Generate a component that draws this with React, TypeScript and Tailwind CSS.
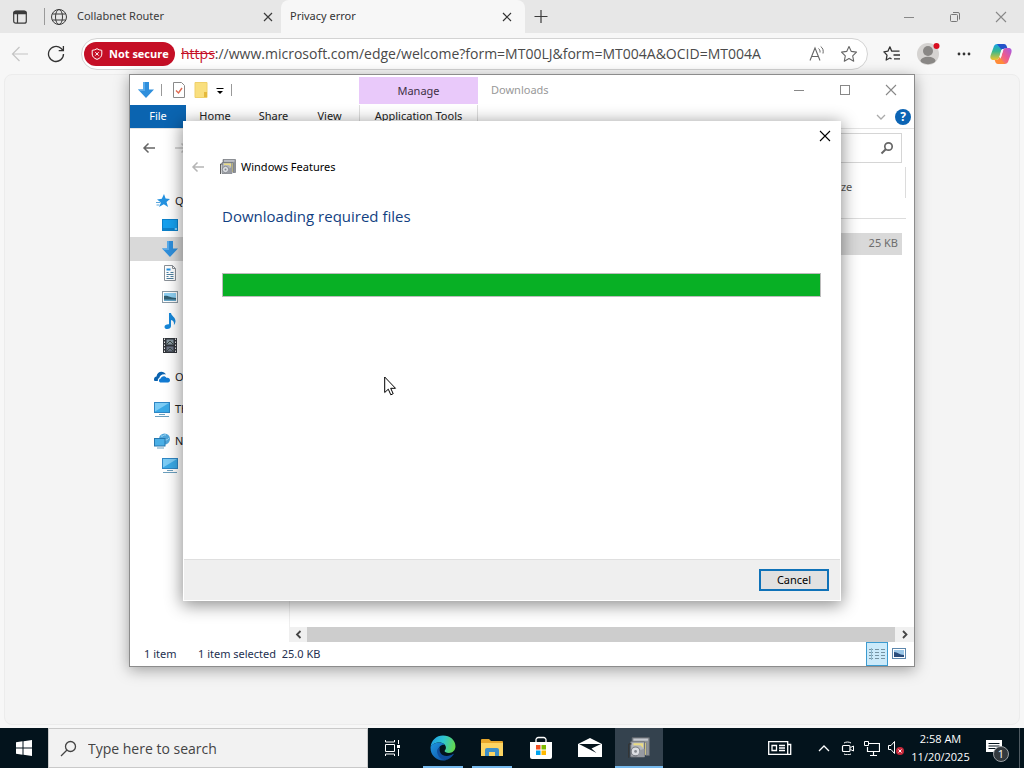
import type { ReactNode } from "react";

interface IconProps {
  className?: string;
}

function Svg({
  size = 16,
  className = "",
  children,
}: IconProps & { size?: number; children: ReactNode }) {
  return (
    <svg
      width={size}
      height={size}
      viewBox={`0 0 ${size} ${size}`}
      fill="none"
      stroke="currentColor"
      className={`shrink-0 ${className}`}
      aria-hidden="true"
    >
      {children}
    </svg>
  );
}

/* ---------- shared glyphs ---------- */

const CloseIcon = ({ className }: IconProps) => (
  <Svg size={12} className={className}>
    <path d="M1 1l10 10M11 1L1 11" strokeWidth="1.1" />
  </Svg>
);

const SmallCloseIcon = ({ className }: IconProps) => (
  <Svg size={10} className={className}>
    <path d="M1 1l8 8M9 1L1 9" strokeWidth="1.2" />
  </Svg>
);

const MinimizeIcon = ({ className }: IconProps) => (
  <Svg size={12} className={className}>
    <path d="M1 6.5h10" />
  </Svg>
);

const BackIcon = ({ className }: IconProps) => (
  <Svg size={14} className={className}>
    <path d="M13 7H2M6.5 2.5L2 7l4.500 4.500" strokeWidth="1.500" />
  </Svg>
);

const DownArrowIcon = () => (
  <Svg>
    <path d="M5 0h6v7.500h5L8 16 0 7.500h5z" fill="#2f8fdc" stroke="none" />
    <path d="M5 0h2v9H2L0 7.500h5z" fill="#58aaea" stroke="none" />
  </Svg>
);

const SetupIcon = ({ size = 16 }: { size?: number }) => (
  <svg width={size} height={size} viewBox="0 0 16 16" className="shrink-0" aria-hidden="true">
    <path d="M3 .5h12.500v13H13V4H3z" fill="#8f9399" stroke="#64686e" strokeWidth=".6" />
    <path d="M4 1.200h10.500v1.500H4z" fill="#c6c9cf" />
    <path d="M11.500 4h1.500v9h-1.500z" fill="#dccf86" />
    <path d="M2 3.500h10v11H2z" fill="#b4b7bc" stroke="#6f7378" strokeWidth=".7" />
    <path d="M4 4.500h7v3.500L9 6H4z" fill="#eadb83" />
    <path d="M.5 5v10M.5 5h2" stroke="#333" strokeWidth=".8" />
    <circle cx="5.500" cy="10.500" r="3.200" fill="#dcdee2" stroke="#767a80" strokeWidth=".8" />
    <circle cx="5.500" cy="10.500" r="1" fill="#85898f" />
    <path d="M9 9.500l3-1v6H6.500z" fill="#979aa1" />
  </svg>
);

/* ---------- browser glyphs ---------- */

const WorkspaceIcon = () => (
  <Svg>
    <rect x="1.700" y="2.200" width="12.600" height="12" rx="2" strokeWidth="1.200" />
    <path d="M1.500 4.500a2.500 2.500 0 012.500-2.800h8a2.500 2.500 0 012.500 2.800v.7h-13z" fill="currentColor" stroke="none" />
    <path d="M5.500 5v9" strokeWidth="1.200" />
  </Svg>
);

const GlobeIcon = () => (
  <Svg size={18}>
    <circle cx="9" cy="9" r="7.500" />
    <ellipse cx="9" cy="9" rx="3.500" ry="7.500" />
    <path d="M2.300 6h13.400M2.300 12h13.400" />
  </Svg>
);

const RefreshIcon = () => (
  <Svg size={18}>
    <path d="M16.500 9a7.500 7.500 0 11-2.600-5.700l2.100 2" strokeWidth="1.300" />
    <path d="M16.400 1v4.600h-4.700" strokeWidth="1.300" />
  </Svg>
);

const ShieldIcon = () => (
  <Svg size={12}>
    <path d="M6 .7c1.500 1 3 1.500 4.800 1.600V6c0 2.600-1.800 4.300-4.800 5.400C3 10.300 1.200 8.600 1.200 6V2.300C3 2.200 4.500 1.700 6 .7z" />
    <path d="M4.300 4.200l3.400 3.400M7.700 4.200L4.300 7.600" />
  </Svg>
);

const ReadAloudIcon = () => (
  <Svg size={18}>
    <path d="M2 15.500L7 3l5 12.500M3.700 11.500h6.700" strokeWidth="1.100" />
    <path d="M10.500 3.500c1.200.9 1.700 2.200 1.500 4M12.700 1.500c2.300 1.700 2.900 4 2.300 7" />
  </Svg>
);

const StarIcon = () => (
  <Svg size={18}>
    <path
      d="M9 1.500l2.300 4.900 5.200.7-3.800 3.700 1 5.400L9 13.600l-4.700 2.600 1-5.400L1.500 7.100l5.200-.7z"
      strokeLinejoin="round"
      strokeWidth="1.100"
    />
  </Svg>
);

const FavoritesIcon = () => (
  <Svg size={18}>
    <path
      d="M16.500 6.200h-5L8.600 6 6.900 1.800 4.900 6.200.9 6.800l3.100 3.300-.8 4.900 3.700-2 1.600.9"
      strokeLinejoin="round"
      strokeWidth="1.300"
    />
    <path d="M10.500 10h6.500M11 13.800h6" strokeWidth="1.300" />
  </Svg>
);

const CopilotIcon = () => (
  <svg width="24" height="24" viewBox="0 0 24 24" aria-hidden="true">
    <defs>
      <linearGradient id="copilotA" x1="0" y1="0" x2="0" y2="1">
        <stop offset="0" stopColor="#17a3e8" />
        <stop offset=".45" stopColor="#36b88f" />
        <stop offset="1" stopColor="#f2c32c" />
      </linearGradient>
      <linearGradient id="copilotB" x1="1" y1="0" x2="0" y2="1">
        <stop offset="0" stopColor="#a25ae8" />
        <stop offset=".5" stopColor="#ed5c8e" />
        <stop offset="1" stopColor="#ff9243" />
      </linearGradient>
    </defs>
    <path d="M15 2H8.500C6 2 5 3.500 4.300 6L1.700 13c-1 3.200.2 5 3 5H7c2 0 2.700-1 3.300-3l2.500-9c.3-1.300 1-2 2.200-2z" fill="url(#copilotA)" />
    <path d="M9.500 22h6c2.500 0 3.500-1.500 4.200-4l2.600-7c1-3.200-.2-5-3-5H17c-2 0-2.700 1-3.300 3l-2.500 9c-.3 1.300-.8 2-2 2z" fill="url(#copilotB)" />
    <path d="M8 2h7c1.700 0 2.300 1 2.800 2.500l.5 1.500H17c-2 0-2.800 1-3.400 3z" fill="#2453c9" />
    <path d="M16 22H9c-1.700 0-2.300-1-2.800-2.500L5.700 18H7c2 0 2.800-1 3.400-3l1.600 2z" fill="#ff8b38" />
    <path d="M10.500 15l2.600-8h1.500l-2.500 8z" fill="#f7f7f7" />
  </svg>
);

function IconButton({
  label,
  className = "",
  children,
}: {
  label: string;
  className?: string;
  children: ReactNode;
}) {
  return (
    <button
      type="button"
      aria-label={label}
      className={`flex shrink-0 items-center justify-center ${className}`}
    >
      {children}
    </button>
  );
}

function Browser() {
  return (
    <>
      <div className="flex h-[33px] shrink-0 items-stretch bg-[#e7e7e7] font-['Noto_Sans',sans-serif] text-[11px] text-[#3b3b3b]">
        <IconButton label="Tab actions" className="w-10">
          <WorkspaceIcon />
        </IconButton>
        <div className="my-2 ml-1 w-px bg-[#9a9a9a]" />
        <div className="flex w-[236px] items-center gap-[9px] pl-[5px]">
          <GlobeIcon />
          <span className="flex-1">Collabnet Router</span>
          <IconButton label="Close Collabnet Router" className="mr-2 size-[10px]">
            <SmallCloseIcon />
          </IconButton>
        </div>
        <div className="flex w-[244px] items-center rounded-t-lg bg-[#f7f7f7] pl-[9px] text-[#333]">
          <span className="flex-1">Privacy error</span>
          <IconButton label="Close Privacy error" className="mr-[13px] size-[10px]">
            <SmallCloseIcon />
          </IconButton>
        </div>
        <IconButton label="New tab" className="w-[31px]">
          <Svg>
            <path d="M8 1v13M1.500 7.500h13" strokeWidth="1.200" />
          </Svg>
        </IconButton>
        <div className="flex-1" />
        <IconButton label="Minimize browser" className="w-[46px] text-[#888]">
          <MinimizeIcon />
        </IconButton>
        <IconButton label="Restore browser" className="w-[46px] text-[#777]">
          <Svg size={12}>
            <rect x="1.500" y="3.500" width="7" height="7" rx="1" />
            <path d="M4 1.500h5a1.500 1.500 0 011.500 1.500v5.500" />
          </Svg>
        </IconButton>
        <IconButton label="Close browser" className="w-[46px] text-[#888]">
          <CloseIcon />
        </IconButton>
      </div>

      <div className="flex h-[41px] shrink-0 items-center bg-[#f7f7f7] pt-px text-[#333]">
        <IconButton label="Back" className="w-10 text-[#c4c4c4]">
          <Svg size={18}>
            <path d="M17 9H1.500M8.500 2L1.500 9l7 7" strokeWidth="1.200" />
          </Svg>
        </IconButton>
        <IconButton label="Refresh" className="w-8">
          <RefreshIcon />
        </IconButton>
        <div className="ml-[9px] flex h-8 flex-1 items-center rounded-full border border-[#d3d3d3] bg-white pl-[2px]">
          <button
            type="button"
            className="flex h-6 w-[91px] items-center gap-[6px] rounded-full bg-[#c50f26] pl-[7px] text-[11px] font-bold whitespace-nowrap text-white"
          >
            <ShieldIcon />
            Not secure
          </button>
          <label htmlFor="address" className="ml-[6px] text-sm text-[#c50f26] line-through">
            https
          </label>
          <input
            id="address"
            type="text"
            defaultValue="://www.microsoft.com/edge/welcome?form=MT00LJ&form=MT004A&OCID=MT004A"
            className="min-w-0 flex-1 bg-transparent text-sm text-[#4a4a4a] outline-none"
          />
          <IconButton label="Read aloud" className="w-8 text-[#666]">
            <ReadAloudIcon />
          </IconButton>
          <IconButton label="Add to favorites" className="mr-[2px] w-8 text-[#666]">
            <StarIcon />
          </IconButton>
        </div>
        <IconButton label="Favorites" className="ml-[6px] w-9">
          <FavoritesIcon />
        </IconButton>
        <IconButton label="Profile" className="w-9">
          <svg width="24" height="24" viewBox="0 0 24 24" aria-hidden="true">
            <circle cx="12" cy="12" r="11" fill="#d5d3d1" />
            <circle cx="12" cy="9" r="5" fill="#898785" />
            <ellipse cx="12" cy="18.500" rx="7.500" ry="3.700" fill="#898785" />
            <circle cx="20.500" cy="4" r="3" fill="#d80e20" />
          </svg>
        </IconButton>
        <IconButton label="Settings and more" className="w-9">
          <Svg>
            <g fill="currentColor" stroke="none">
              <circle cx="3" cy="8" r="1.400" />
              <circle cx="8" cy="8" r="1.400" />
              <circle cx="13" cy="8" r="1.400" />
            </g>
          </Svg>
        </IconButton>
        <IconButton label="Copilot" className="mr-1 w-[38px]">
          <CopilotIcon />
        </IconButton>
      </div>
    </>
  );
}

/* ---------- navigation pane ---------- */

const MonitorIcon = () => (
  <Svg>
    <rect x=".5" y="1.500" width="15" height="10" fill="#3aa9e6" stroke="#2f86c4" />
    <path d="M1 2h14L1 10.500z" fill="#7cccf5" stroke="none" />
    <path d="M5 13.500h6M1 15.500h14" stroke="#6b9fbe" />
  </Svg>
);

interface NavItem {
  name: string;
  icon: ReactNode;
  nested?: boolean;
  gap?: boolean;
  selected?: boolean;
}

const navItems: NavItem[] = [
  {
    name: "Quick access",
    icon: (
      <Svg size={14}>
        <path d="M8 0l1.600 4.500 4.400.4-3.500 3 1.600 5.100-4.300-2.700L3 13l2-4.500L1 5.500l4.800-.8z" fill="#2391e0" stroke="none" />
        <path d="M0 8.500h4.500M.5 11h3" stroke="#5ba6dc" />
      </Svg>
    ),
  },
  {
    name: "Desktop",
    nested: true,
    icon: (
      <Svg>
        <rect x=".5" y="2.500" width="15" height="11" fill="#16a0ee" stroke="#0b80c9" />
        <path d="M1 12h11" stroke="#0a65a6" />
        <path d="M13 12h2" stroke="#fff" />
      </Svg>
    ),
  },
  { name: "Downloads", nested: true, selected: true, icon: <DownArrowIcon /> },
  {
    name: "Documents",
    nested: true,
    icon: (
      <Svg>
        <path d="M2.500.5h8l3 3v12h-11z" fill="#fff" stroke="#8a9097" />
        <path d="M10.500.5v3h3" stroke="#8a9097" />
        <path d="M4.500 7.500h2M4.500 9.500h7M4.500 11.500h2M4.500 13.500h7M8.500 7.500h3M8.500 11.500h3" stroke="#4d7f9f" />
        <path d="M4.500 4.500h4" stroke="#2391e0" strokeWidth="2" />
      </Svg>
    ),
  },
  {
    name: "Pictures",
    nested: true,
    icon: (
      <Svg>
        <rect x=".5" y="2.500" width="15" height="11" fill="#fff" stroke="#8a9aa5" />
        <path d="M2 4h12v5H2z" fill="#8ed0f3" stroke="none" />
        <path d="M2 7c4-1 6 2 12 2v3H2z" fill="#315f72" stroke="none" />
        <path d="M2 10.500h12V12H2z" fill="#67a7c9" stroke="none" />
      </Svg>
    ),
  },
  {
    name: "Music",
    nested: true,
    icon: (
      <Svg>
        <path d="M7 0h2c.3 3 4.500 4 4.500 8 0 1.500-.7 3-1.600 4 .6-3-.8-4.500-2.900-5v6c0 1.700-1.600 3-3.700 3-1.700 0-2.800-.9-2.800-2.100C2.500 12 4.500 11 7 11.200z" fill="#1687d9" stroke="none" />
      </Svg>
    ),
  },
  {
    name: "Videos",
    nested: true,
    icon: (
      <Svg>
        <rect x="1" y="1" width="14" height="15" fill="#30343a" stroke="none" />
        <path d="M2.500 1.500v14M13.500 1.500v14" stroke="#e0e0e0" strokeDasharray="1.500 1.500" />
        <path d="M4.500 2.500h7v5h-7z" fill="#8796a0" stroke="none" />
        <path d="M4.500 9.500h7v5h-7z" fill="#6c7486" stroke="none" />
        <path d="M5 7l3-3 3 3M5 14l3-3 3 3" stroke="#3c4a42" />
      </Svg>
    ),
  },
  {
    name: "OneDrive",
    gap: true,
    icon: (
      <Svg>
        <path d="M0 11c-.2-2 1-3.300 2.500-3.500C3 4 6.500 1.500 10 3.500c1 .5 1.500 1.200 2 2C8 4.500 5.500 7 5.300 9 4 9.500 3.500 11 4 12H1.500C.7 12 0 11.700 0 11z" fill="#0a62ae" stroke="none" />
        <path d="M5 12c-.2-1.500.7-2.300 1.700-2.500C7 7 11 6 12.700 8.900 14.500 8.500 16 9.500 16 11.300c0 1.300-.8 2.200-2 2.200H7c-1.200 0-2-.6-2-1.500z" fill="#127bd3" stroke="none" />
      </Svg>
    ),
  },
  { name: "This PC", gap: true, icon: <MonitorIcon /> },
  {
    name: "Network",
    gap: true,
    icon: (
      <Svg>
        <circle cx="10.500" cy="6" r="5.500" fill="#4fa6db" stroke="none" />
        <path d="M7 3c2 1 3-2 5-1M9 8c2-2 4 0 6-3" stroke="#a9dcf5" />
        <rect x=".5" y="5.500" width="10.500" height="7.500" fill="#4aafe6" stroke="#2677ae" />
        <path d="M3 15h7" stroke="#6b9fbe" />
      </Svg>
    ),
  },
  { name: "Shared computer", nested: true, icon: <MonitorIcon /> },
];

function NavPane() {
  return (
    <nav aria-label="Folders" className="w-40 shrink-0 border-r border-[#efefef] pt-[22px]">
      {navItems.map((item) => (
        <a
          key={item.name}
          href="#"
          aria-label={item.name}
          className={`flex h-6 items-center gap-[5px] overflow-hidden ${
            item.nested ? "pl-8" : "pl-6"
          } ${item.gap ? "mt-2" : ""} ${item.selected ? "bg-[#d9d9d9]" : ""}`}
        >
          <span className="flex w-4 justify-end">{item.icon}</span>
          {item.nested ? null : <span>{item.name}</span>}
        </a>
      ))}
    </nav>
  );
}

/* ---------- explorer window ---------- */

function Explorer() {
  return (
    <section
      aria-label="Downloads"
      className="absolute top-[74px] right-[109px] bottom-[101px] left-[129px] flex flex-col border border-[#8c8c8c] bg-white font-['Noto_Sans',sans-serif] text-[11px] text-[#222] shadow-[0_3px_14px_rgba(0,0,0,0.35)]"
    >
      <div className="flex h-[30px] shrink-0 items-center">
        <div className="flex flex-1 items-center">
          <div className="flex w-[229px] items-center pl-2">
            <DownArrowIcon />
            <div className="ml-[7px] h-3 w-px bg-[#999]" />
            <IconButton label="Properties" className="ml-[9px]">
              <Svg>
                <path d="M2.500.5h8l3 3v12h-11z" fill="#fff" stroke="#8a8a8a" />
                <path d="M5 8.500l2.500 2.500L11 6" stroke="#df6a50" strokeWidth="1.400" />
              </Svg>
            </IconButton>
            <IconButton label="New folder" className="ml-[6px]">
              <Svg>
                <path d="M2 .5h12v15H2z" fill="#f9df7e" stroke="#efd06a" />
                <path d="M11 10h3v5h-3z" fill="#e5b93c" stroke="none" />
              </Svg>
            </IconButton>
            <IconButton label="Customize toolbar" className="ml-[6px] text-black">
              <Svg size={10}>
                <path d="M1.500 3.500h7" />
                <path d="M2 6h6L5 9z" fill="currentColor" stroke="none" />
              </Svg>
            </IconButton>
            <div className="ml-[6px] h-3 w-px bg-[#999]" />
          </div>
          <div className="flex h-[27px] w-[119px] items-center justify-center self-end bg-[#e9c9fa] pt-[2px] text-[#3d3045]">
            Manage
          </div>
          <span className="ml-[13px] text-[#999]">Downloads</span>
        </div>
        <IconButton label="Minimize" className="w-[46px] text-[#888]">
          <MinimizeIcon />
        </IconButton>
        <IconButton label="Maximize" className="w-[46px] text-[#888]">
          <Svg size={12}>
            <rect x="1.500" y="1.500" width="9" height="9" />
          </Svg>
        </IconButton>
        <IconButton label="Close" className="w-[46px] text-[#888]">
          <CloseIcon />
        </IconButton>
      </div>

      <div className="flex h-6 shrink-0 border-b border-[#e3e3e3]">
        <button type="button" className="w-14 bg-[#0b64b0] text-white">
          File
        </button>
        <button type="button" className="w-[58px]">Home</button>
        <button type="button" className="w-[59px]">Share</button>
        <button type="button" className="w-[53px]">View</button>
        <button type="button" className="ml-[3px] w-[119px] border-x border-[#dedede] whitespace-nowrap">
          Application Tools
        </button>
        <div className="flex-1" />
        <IconButton label="Expand ribbon" className="w-5 text-[#aaa]">
          <Svg size={10}>
            <path d="M1 3l4 4 4-4" strokeWidth="1.300" />
          </Svg>
        </IconButton>
        <IconButton label="Help" className="mr-[3px] ml-1 w-4 text-white">
          <span className="flex size-4 shrink-0 items-center justify-center rounded-full bg-[#0c64b4] text-xs font-bold">
            ?
          </span>
        </IconButton>
      </div>

      <div className="flex h-[38px] shrink-0 items-center pr-3 pl-3 text-[#666]">
        <IconButton label="Back">
          <BackIcon />
        </IconButton>
        <IconButton label="Forward" className="ml-[18px] text-[#ccc]">
          <BackIcon className="rotate-180" />
        </IconButton>
        <div className="ml-auto flex h-[30px] w-[200px] items-center border border-[#d5d5d5] pr-[7px]">
          <input type="search" aria-label="Search Downloads" className="min-w-0 flex-1 outline-none" />
          <Svg size={14}>
            <circle cx="8.500" cy="5.500" r="3.700" strokeWidth="1.700" />
            <path d="M6 8l-4.500 4.500" strokeWidth="2" />
          </Svg>
        </div>
      </div>

      <div className="flex min-h-0 flex-1">
        <NavPane />
        <div className="flex min-w-0 flex-1 flex-col">
          <div className="flex-1 pr-2">
            <table className="w-full border-collapse">
              <thead>
                <tr className="h-[51px] border-b border-[#dcdcdc] align-top">
                  <td />
                  <th className="w-[74px] p-0 text-left font-normal text-[#555]">
                    <div className="flex h-[31px] items-end border-r border-[#dcdcdc] pb-[3px]">Size</div>
                  </th>
                </tr>
              </thead>
              <tbody className="text-[#6d6d6d]">
                <tr>
                  <td className="p-0 pt-[14px]">
                    <div className="h-[22px] bg-[#d9d9d9]" />
                  </td>
                  <td className="p-0 pt-[14px] pr-1">
                    <div className="flex h-[22px] items-center justify-end bg-[#d9d9d9] pr-1">25 KB</div>
                  </td>
                </tr>
              </tbody>
            </table>
          </div>
          <div className="flex h-[15px] shrink-0 bg-[#f0f0f0] text-[#444]">
            <IconButton label="Scroll left" className="w-[17px]">
              <Svg size={9}>
                <path d="M6.500 1L3 4.500 6.500 8" strokeWidth="1.800" />
              </Svg>
            </IconButton>
            <div className="flex-1 bg-[#cdcdcd]" />
            <IconButton label="Scroll right" className="w-[19px]">
              <Svg size={9}>
                <path d="M3 1l3.500 3.500L3 8" strokeWidth="1.800" />
              </Svg>
            </IconButton>
          </div>
        </div>
      </div>

      <footer className="flex h-6 shrink-0 items-center pl-[14px] text-[#243050]">
        <span className="w-[54px]">1 item</span>
        <span className="flex-1 whitespace-pre">{"1 item selected  25.0 KB"}</span>
        <IconButton label="Details view" className="h-6 w-[22px] border border-[#3c9bd0] bg-[#cbeafa]">
          <Svg>
            <path d="M0 3.500h16M0 6.500h16M0 9.500h16M0 12.500h16" stroke="#7693a2" strokeDasharray="4 2" />
            <path d="M2.500 2v12" stroke="#8fb8cc" />
          </Svg>
        </IconButton>
        <IconButton label="Thumbnail view" className="w-[22px]">
          <Svg size={14}>
            <rect x=".5" y="1.500" width="13" height="10" fill="#fff" stroke="#5d87ad" />
            <path d="M2 3h10v7H2z" fill="#9bc7e8" stroke="none" />
            <path d="M2 5c4 0 5 3 10 3v2H2z" fill="#2b4d7c" stroke="none" />
          </Svg>
        </IconButton>
        <div className="w-1" />
      </footer>

      <FeaturesDialog />
    </section>
  );
}

function FeaturesDialog() {
  return (
    <div
      role="dialog"
      aria-labelledby="features-title"
      className="absolute top-[46px] right-[73px] bottom-[65px] left-[53px] flex flex-col border border-white bg-white text-black shadow-[0_3px_16px_1px_rgba(0,0,0,0.45)]"
    >
      <div className="flex justify-end pt-2 pr-[9px]">
        <IconButton label="Close dialog" className="size-3">
          <CloseIcon />
        </IconButton>
      </div>
      <div className="mt-[15px] flex h-5 items-center pl-[7px]">
        <IconButton label="Previous" className="text-[#b5b5b5]">
          <BackIcon />
        </IconButton>
        <div className="ml-[15px] flex items-center gap-[5px]">
          <SetupIcon />
          <span id="features-title">Windows Features</span>
        </div>
      </div>
      <div className="flex-1 pt-[27px] pr-[19px] pl-[38px]">
        <h1 className="font-['Open_Sans',sans-serif] text-[15px] leading-6 text-[#123f82]">
          Downloading required files
        </h1>
        <div
          role="progressbar"
          aria-label="Downloading required files"
          className="mt-[45px] h-6 border border-[#bcbcbc] bg-[#08b025]"
        />
      </div>
      <div className="flex h-[41px] items-center justify-end border-t border-[#dfdfdf] bg-[#efefef] pr-[11px]">
        <button
          type="button"
          className="h-[22px] w-[70px] border-2 border-[#0f72b8] bg-[#e1e1e1] leading-4"
        >
          Cancel
        </button>
      </div>
    </div>
  );
}

/* ---------- taskbar ---------- */

const EdgeLogo = () => (
  <svg width="26" height="26" viewBox="0 0 24 24" aria-hidden="true">
    <defs>
      <linearGradient id="edgeTop" x1="0" y1=".3" x2="1" y2=".5">
        <stop offset="0" stopColor="#1f9fe5" />
        <stop offset=".5" stopColor="#2fc6d0" />
        <stop offset="1" stopColor="#64d94b" />
      </linearGradient>
      <linearGradient id="edgeLow" x1="0" y1="0" x2="1" y2="1">
        <stop offset="0" stopColor="#1e97e2" />
        <stop offset="1" stopColor="#0d4fa4" />
      </linearGradient>
    </defs>
    <path d="M.5 11C1.300 4.700 6 .5 12 .5c6.500 0 11.500 4.300 11.500 9.800 0 3.700-2.700 6.200-6 6.200-2.600 0-4-.9-4-1.800 0-.8 1.200-1.100 1.200-3 0-2.500-2.500-4.700-6-4.700-3.600 0-6.900 2-8.200 4z" fill="url(#edgeTop)" />
    <path d="M.5 11C2 8.500 5 7 8.700 7c2.300 0 4.200.9 5.200 2.200-3.700-.6-6.200 1.800-6.200 5.300 0 4.300 3.300 7.700 7.500 8.500-1 .4-2.100.5-3.200.5C5.500 23.500.5 18.500.5 12z" fill="url(#edgeLow)" />
    <path d="M9.400 11c-1.800 4.500 1.200 8.300 6 8.300 2.400 0 4.400-.8 6-2 .4-.2.700.2.500.5-2 3.200-5 5.200-7.400 5.200-4.500 0-8-4-8-8.200 0-1.600 1.300-3.200 2.900-3.800z" fill="#0f4d9b" />
  </svg>
);

const FolderLogo = () => (
  <svg width="22" height="20" viewBox="0 0 22 20" aria-hidden="true">
    <path d="M0 2a1 1 0 011-1h7l2 2h11a1 1 0 011 1v14H0z" fill="#e7a72b" />
    <path d="M0 5h22v13H0z" fill="#fcd462" />
    <path d="M4 18v-6a2 2 0 012-2h10a2 2 0 012 2v6h-4v-4H8v4z" fill="#3d8fc8" />
  </svg>
);

const StoreLogo = () => (
  <svg width="24" height="24" viewBox="0 0 24 24" aria-hidden="true">
    <path d="M7 7V4.500a2.500 2.500 0 012.500-3h5a2.500 2.500 0 012.500 3V7" fill="none" stroke="#fff" strokeWidth="1.300" />
    <path d="M1 6h22v15a2 2 0 01-2 2H3a2 2 0 01-2-2z" fill="#fff" />
    <path d="M7 9h4.500v4.500H7z" fill="#f25022" />
    <path d="M12.500 9H17v4.500h-4.500z" fill="#7fba00" />
    <path d="M7 14.500h4.500V19H7z" fill="#00a4ef" />
    <path d="M12.500 14.500H17V19h-4.500z" fill="#ffb900" />
  </svg>
);

const MailLogo = () => (
  <svg width="24" height="20" viewBox="0 0 24 20" aria-hidden="true">
    <path d="M0 6l12-6 12 6v13H0z" fill="#fff" />
    <path d="M1 6h22l-9.500 4.500 5 4.500z" fill="#06141d" />
  </svg>
);

const pinnedApps = [
  { name: "Microsoft Edge", icon: <EdgeLogo />, className: "border-[#76b9ed]" },
  { name: "File Explorer", icon: <FolderLogo />, className: "border-[#76b9ed]" },
  { name: "Microsoft Store", icon: <StoreLogo />, className: "border-transparent" },
  { name: "Mail", icon: <MailLogo />, className: "border-transparent" },
];

function Taskbar() {
  return (
    <footer className="flex h-10 shrink-0 items-stretch bg-[#03131c] text-white">
      <IconButton label="Start" className="w-12">
        <svg width="16" height="16" viewBox="0 0 16 16" fill="#fff" aria-hidden="true">
          <path d="M0 2.200L6.500 1.300v6.200H0zM7.500 1.200L16 0v7.500H7.500zM0 8.500h6.500v6.200L0 13.800zM7.500 8.500H16V16l-8.500-1.200z" />
        </svg>
      </IconButton>
      <label className="flex w-80 items-center gap-[11px] border border-[#c9c9c9] bg-[#f2f2f2] pt-px pl-[11px] text-[#444]">
        <Svg size={17}>
          <circle cx="10.500" cy="6.500" r="5" strokeWidth="1.300" />
          <path d="M7 10L1 16" strokeWidth="1.300" />
        </Svg>
        <input
          type="text"
          aria-label="Search"
          placeholder="Type here to search"
          className="min-w-0 flex-1 bg-transparent text-sm outline-none placeholder:text-[#444]"
        />
      </label>
      <IconButton label="Task view" className="w-[47px]">
        <Svg>
          <path d="M1.500 4.500h9v7h-9zM1.500 0v2h9V0M1.500 16v-2h9v2M14.500 0v4M14.500 9v7" />
          <path d="M13 5h3v3h-3z" fill="#fff" stroke="none" />
        </Svg>
      </IconButton>
      <div className="ml-[3px] flex">
        {pinnedApps.map((app) => (
          <div key={app.name} className="flex w-[49px] justify-center">
            <IconButton label={app.name} className={`w-10 border-b-2 pt-[2px] ${app.className}`}>
              {app.icon}
            </IconButton>
          </div>
        ))}
      </div>
      <IconButton label="Windows Features" className="ml-px w-12 border-b-2 border-[#76b9ed] bg-[#34424e] pt-[2px]">
        <SetupIcon size={22} />
      </IconButton>
      <div className="flex-1" />
      <IconButton label="News" className="w-[50px]">
        <Svg size={24}>
          <path d="M.7 5.700h19v12.600h-19zM19.700 8.500h3v9.800h-3" strokeWidth="1.300" />
          <path d="M4 9.500h4.500v5H4zM11 9.500h6M11 12h6M11 14.500h6" strokeWidth="1.300" />
        </Svg>
      </IconButton>
      <IconButton label="Show hidden icons" className="ml-[7px] w-6">
        <Svg size={12}>
          <path d="M1 9l5-5 5 5" strokeWidth="1.300" />
        </Svg>
      </IconButton>
      <IconButton label="Meet now" className="w-6">
        <Svg size={14}>
          <rect x="1.500" y="4.500" width="7.500" height="6" rx="1" strokeWidth="1.200" />
          <path d="M9.500 6.500l3-1.500v5l-3-1.500M3 2c2-1.300 5-1.300 7 0M3 13c2 1 5 1 7 0" />
        </Svg>
      </IconButton>
      <IconButton label="Network" className="w-6">
        <Svg>
          <path d="M5 3.500h10.500v8H3.500V7M9.500 12v3M6 15.500h7" strokeWidth="1.200" />
          <path d="M.5 1.500h4v4h-4z" />
        </Svg>
      </IconButton>
      <IconButton label="Volume muted" className="w-6">
        <Svg>
          <path d="M.5 5.500H3l3.500-4v12l-3.500-4H.5z" />
          <circle cx="12" cy="11" r="4" fill="#c8283a" stroke="none" />
          <path d="M10.500 9.500l3 3M13.500 9.500l-3 3" />
        </Svg>
      </IconButton>
      <button type="button" className="w-[65px] text-center text-[11px] leading-[18px]">
        <span className="block">2:58 AM</span>
        <span className="block">11/20/2025</span>
      </button>
      <IconButton label="1 new notification" className="relative w-[46px]">
        <Svg className="-ml-1">
          <path d="M0 0h16v12h-5v4l-4-4H0z" fill="#fff" stroke="none" />
          <path d="M2.500 3.500h11M2.500 6h11M2.500 8.500h7" stroke="#03131c" />
        </Svg>
        <span className="absolute top-[18px] left-5 flex size-4 items-center justify-center rounded-full border border-[#9ba0a5] bg-[#33393e] text-[11px]">
          1
        </span>
      </IconButton>
      <div className="w-[5px] border-l border-[#4f5a62]" />
    </footer>
  );
}

export default function App() {
  return (
    <main className="relative flex h-screen min-h-[600px] flex-col overflow-hidden bg-[#f7f7f7] font-['Open_Sans',sans-serif]">
      <Browser />
      <div className="mx-1 mb-[3px] flex-1 rounded-lg border border-[#ececec] bg-[#f4f4f4]" />
      <Explorer />
      <Taskbar />
      <svg
        width="13"
        height="20"
        viewBox="0 0 13 20"
        className="absolute top-[376px] left-[384px]"
        aria-hidden="true"
      >
        <path d="M.7 1v15.500l3.600-3.300 2.500 5.600 2.400-1.100-2.500-5.400h4.800z" fill="#fff" stroke="#000" />
      </svg>
    </main>
  );
}
